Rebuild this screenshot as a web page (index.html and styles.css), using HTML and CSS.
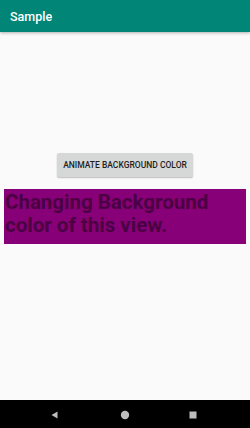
FILE: index.html
```html
<!DOCTYPE html>
<html lang="en">
<head>
    <meta charset="UTF-8">
    <meta name="viewport" content="width=device-width, initial-scale=1.0">
    <title>Sample</title>
    <link rel="stylesheet" href="styles.css">
</head>
<body>
    <div class="screen">
        <div class="app-bar">
            <div class="app-title">Sample</div>
        </div>
        <div class="content">
            <div class="button-row">
                <button class="animate-button">ANIMATE BACKGROUND COLOR</button>
            </div>
            <div class="color-view">Changing Background color of this view.</div>
        </div>
        <div class="nav-bar">
            <svg class="nav-back" width="10" height="10" viewBox="0 0 10 10">
                <polygon points="7.5,1.5 7.5,8.5 1.5,5" fill="#bdbdbd"/>
            </svg>
            <svg class="nav-home" width="10" height="10" viewBox="0 0 10 10">
                <circle cx="5" cy="5" r="4.2" fill="#bdbdbd"/>
            </svg>
            <svg class="nav-recent" width="10" height="10" viewBox="0 0 10 10">
                <rect x="1.5" y="1.5" width="7" height="7" fill="#bdbdbd"/>
            </svg>
        </div>
    </div>
</body>
</html>
```

FILE: styles.css
```css
html, body {
    margin: 0;
    padding: 0;
}
body {
    font-family: Roboto, "Liberation Sans", sans-serif;
    background-color: #fafafa;
}
.screen {
    display: flex;
    flex-direction: column;
    width: 250px;
    height: 428px;
}
.app-bar {
    height: 32px;
    background-color: #008577;
    display: flex;
    align-items: center;
    padding-left: 10px;
    box-shadow: 0 1px 3px rgba(0, 0, 0, 0.3);
    position: relative;
}
.app-title {
    color: #ffffff;
    font-size: 12.5px;
    font-weight: 500;
}
.content {
    flex: 1;
    display: flex;
    flex-direction: column;
    padding-top: 121px;
}
.button-row {
    display: flex;
    justify-content: center;
}
.animate-button {
    width: 136px;
    height: 24px;
    border: none;
    border-radius: 2px;
    background-color: #d6d7d7;
    box-shadow: 0 1px 1.5px rgba(0, 0, 0, 0.25);
    font-family: Roboto, "Liberation Sans", sans-serif;
    font-size: 8.5px;
    font-weight: 500;
    color: #1f1f1f;
    padding: 0;
}
.color-view {
    margin: 12px 4px 0 4px;
    height: 55px;
    background-color: #880077;
    color: #4a0042;
    font-size: 20.5px;
    font-weight: bold;
    line-height: 23px;
    padding: 2px 0 0 1px;
    box-sizing: border-box;
}
.nav-bar {
    height: 28px;
    background-color: #000000;
    display: flex;
    align-items: center;
    padding-top: 2px;
    padding-left: 50px;
    box-sizing: border-box;
}
.nav-home {
    margin-left: 60px;
}
.nav-recent {
    margin-left: 58px;
}
```
